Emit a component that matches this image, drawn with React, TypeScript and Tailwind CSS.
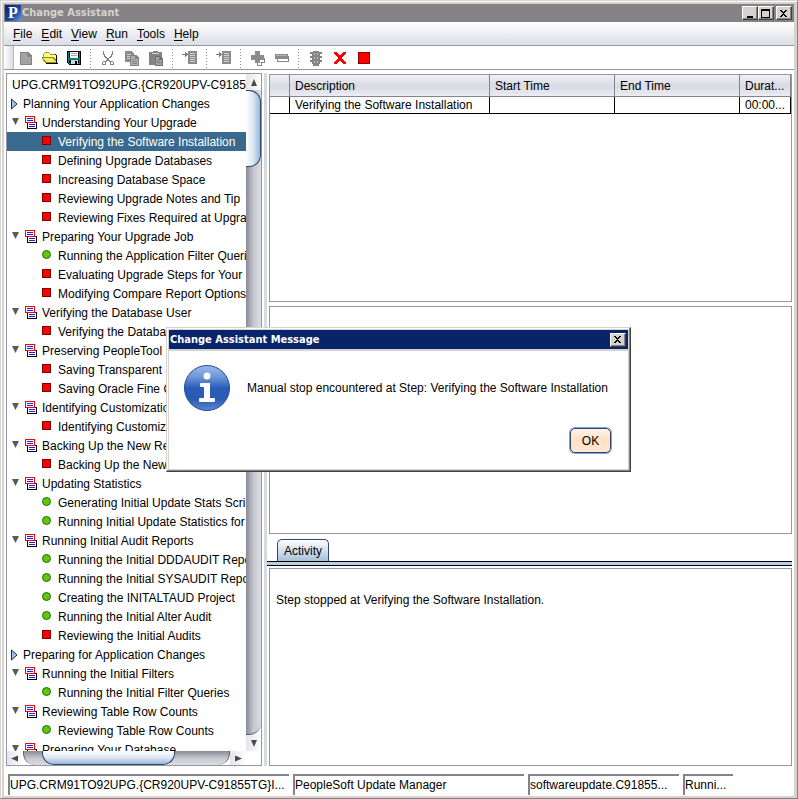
import type { ReactNode } from "react";

type Kind = "root" | "closed" | "group" | "stop" | "done";

const ROWS: { kind: Kind; text: string; selected?: boolean }[] = [
  { kind: "root", text: "UPG.CRM91TO92UPG.{CR920UPV-C91855TG}" },
  { kind: "closed", text: "Planning Your Application Changes" },
  { kind: "group", text: "Understanding Your Upgrade" },
  { kind: "stop", text: "Verifying the Software Installation", selected: true },
  { kind: "stop", text: "Defining Upgrade Databases" },
  { kind: "stop", text: "Increasing Database Space" },
  { kind: "stop", text: "Reviewing Upgrade Notes and Tip" },
  { kind: "stop", text: "Reviewing Fixes Required at Upgrade" },
  { kind: "group", text: "Preparing Your Upgrade Job" },
  { kind: "done", text: "Running the Application Filter Queries" },
  { kind: "stop", text: "Evaluating Upgrade Steps for Your" },
  { kind: "stop", text: "Modifying Compare Report Options" },
  { kind: "group", text: "Verifying the Database User" },
  { kind: "stop", text: "Verifying the Database User" },
  { kind: "group", text: "Preserving PeopleTool" },
  { kind: "stop", text: "Saving Transparent" },
  { kind: "stop", text: "Saving Oracle Fine Grained" },
  { kind: "group", text: "Identifying Customizations" },
  { kind: "stop", text: "Identifying Customizations" },
  { kind: "group", text: "Backing Up the New Release" },
  { kind: "stop", text: "Backing Up the New Release" },
  { kind: "group", text: "Updating Statistics" },
  { kind: "done", text: "Generating Initial Update Stats Scripts" },
  { kind: "done", text: "Running Initial Update Statistics for" },
  { kind: "group", text: "Running Initial Audit Reports" },
  { kind: "done", text: "Running the Initial DDDAUDIT Report" },
  { kind: "done", text: "Running the Initial SYSAUDIT Report" },
  { kind: "done", text: "Creating the INITALTAUD Project" },
  { kind: "done", text: "Running the Initial Alter Audit" },
  { kind: "stop", text: "Reviewing the Initial Audits" },
  { kind: "closed", text: "Preparing for Application Changes" },
  { kind: "group", text: "Running the Initial Filters" },
  { kind: "done", text: "Running the Initial Filter Queries" },
  { kind: "group", text: "Reviewing Table Row Counts" },
  { kind: "done", text: "Reviewing Table Row Counts" },
  { kind: "group", text: "Preparing Your Database" },
];

function Pix({ children }: { children: ReactNode }) {
  return (
    <svg width="16" height="16" viewBox="0 0 16 16" shapeRendering="crispEdges" aria-hidden="true">
      {children}
    </svg>
  );
}

function GroupIcon() {
  return (
    <svg width="12" height="13" viewBox="0 0 12 13" shapeRendering="crispEdges" className="shrink-0" aria-hidden="true">
      <rect x="2.5" y="6.5" width="9" height="6" fill="#fff" stroke="#000" />
      <rect x="0.5" y="0.5" width="9" height="6" fill="#fff" stroke="#f00" />
      <path d="M2 2.5h6M2 4.5h6M4 8.5h6M4 10.5h6" stroke="#2a1ae0" />
    </svg>
  );
}

function TreeRow({ kind, text, selected }: { kind: Kind; text: string; selected?: boolean }) {
  if (kind === "root")
    return (
      <li role="treeitem" className="flex h-[19px] items-center">
        <span className="h-4 w-px bg-[#1c3a6b]" />
        <span className="ml-[5px]">{text}</span>
      </li>
    );
  if (kind === "closed")
    return (
      <li role="treeitem" className="flex h-[19px] items-center pl-1">
        <button aria-label={"Expand " + text} className="w-3">
          <svg width="7" height="12" viewBox="0 0 7 12" aria-hidden="true">
            <path d="M.5 1v10L6 6z" fill="#a3c0e6" stroke="#1c2c4a" />
          </svg>
        </button>
        <span>{text}</span>
      </li>
    );
  if (kind === "group")
    return (
      <li role="treeitem" className="flex h-[19px] items-center pl-1">
        <button aria-label={"Collapse " + text} className="w-3.5 pb-0.5">
          <svg width="9" height="7" viewBox="0 0 9 7" aria-hidden="true">
            <path d="M1 0h7L4.500 7z" fill="#5a5a5a" />
          </svg>
        </button>
        <GroupIcon />
        <span className="ml-[5px]">{text}</span>
      </li>
    );
  return (
    <li
      role="treeitem"
      aria-selected={!!selected}
      className={selected ? "flex h-[19px] items-center bg-[#39698e] pl-[35px] text-white" : "flex h-[19px] items-center pl-[35px]"}
    >
      <svg width="9" height="9" viewBox="0 0 9 9" className="mb-0.5 shrink-0" aria-hidden="true">
        {kind === "stop" ? (
          <rect x="0.5" y="0.5" width="8" height="8" fill="#f00" stroke="#7b0000" />
        ) : (
          <circle cx="4.5" cy="4.5" r="4" fill="#5fc80a" stroke="#1f6e08" />
        )}
      </svg>
      <span className="ml-[7px]">{text}</span>
    </li>
  );
}

function Tool({ label, children }: { label: string; children: ReactNode }) {
  return (
    <button aria-label={label} className="flex h-full w-6 shrink-0 items-center justify-center">
      <Pix>{children}</Pix>
    </button>
  );
}

function Sep() {
  return (
    <span className="flex w-2.5 shrink-0 items-center justify-center">
      <svg width="2" height="20" viewBox="0 0 2 20" shapeRendering="crispEdges" aria-hidden="true">
        <path d="M.5 1v19" stroke="#8c8c94" strokeDasharray="1 2" />
      </svg>
    </span>
  );
}

function ListIcon() {
  return (
    <>
      <rect x="6" y="1" width="9" height="13" fill="#8c8a8c" />
      <path d="M8 3.500h5M8 5.500h5M8 7.500h5M8 9.500h5M8 11.500h5" stroke="#d2d2d2" />
      <path d="M0 4h3V2h1v1h1v1h1v1H5v1H4v1H3V5H0z" fill="#7b797b" />
    </>
  );
}

function Toolbar() {
  return (
    <div role="toolbar" className="flex h-6 border-b border-[#9496a5] bg-white">
      <span className="w-2.5 shrink-0 border-r border-[#b8b8c8] bg-gradient-to-r from-white to-[#dcdce4]" />
      <Tool label="New">
        <path d="M2 2h8l4 4v9H2z" fill="#848284" />
        <path d="M3 3h6v4h4v7H3z" fill="#a5a2a5" />
        <path d="M9.500 3v3.500H13" fill="none" stroke="#8c8a8c" />
      </Tool>
      <Tool label="Open">
        <path d="M1 4h1V3h1V2h4v1h1v1h5v3h-1V5H7V4H6V3H3v1H2v7H1z" fill="#a59a10" />
        <path d="M3 3h4v1h1v1h5v3H2V4h1z" fill="#fffb9c" />
        <path d="M0 7h12v1h1v1h1v1h1v3H3v-1H2v-1H1V9H0z" fill="#948a00" />
        <path d="M1 8h10v1h1v1h1v1h1v1H4v-1H3v-1H2V9H1z" fill="#f7eb63" />
        <path d="M13 4h1v1h1v8h1v1H4v-1h10V5h-1z" fill="#000" />
      </Tool>
      <Tool label="Save">
        <path d="M1 1h14v14H3v-1H2v-1H1z" fill="#000" />
        <path d="M2 2h1v11h10V2h1v12H3v-1H2z" fill="#008284" />
        <rect x="4" y="2" width="8" height="6" fill="#fff" />
        <path d="M5 3.500h6M5 5.500h6" stroke="#a5a2a5" />
        <rect x="3" y="8" width="11" height="2" fill="#008284" />
        <rect x="5" y="10" width="7" height="4" fill="#d6d3d6" />
        <rect x="9" y="11" width="2" height="3" fill="#000" />
      </Tool>
      <Sep />
      <Tool label="Cut">
        <path d="M3.500 1v3l3 4.500M12.500 1v3l-3 4.500M9.500 8.500l-4 3M6.500 8.500l4 3" fill="none" stroke="#848284" strokeWidth="1.500" />
        <path d="M3.500 11.500h2v3h-3v-2zM12.500 11.500h-2v3h3v-2z" fill="none" stroke="#848284" />
      </Tool>
      <Tool label="Copy">
        <path d="M1 1h6l3 3v8H1z" fill="#8c8a8c" />
        <path d="M3 4.500h4M3 6.500h5M3 8.500h3" stroke="#cecfce" />
        <path d="M6 5h6l3 3v8H6z" fill="#848284" />
        <path d="M7 6h4v3h3v6H7z" fill="#b0aeb0" />
        <path d="M8 9.500h3M8 11.500h5M8 13.500h5" stroke="#848284" />
      </Tool>
      <Tool label="Paste">
        <path d="M1 2h4V1h5v1h4v13H1z" fill="#848284" />
        <path d="M4 3.500h7" stroke="#cecfce" />
        <path d="M7 6h5l3 3v7H7z" fill="#737173" />
        <path d="M8 7h3v3h3v5H8z" fill="#a5a2a5" />
        <path d="M9 10.500h2M9 12.500h4" stroke="#737173" />
      </Tool>
      <Sep />
      <Tool label="Insert step">
        <ListIcon />
      </Tool>
      <Sep />
      <Tool label="Insert task">
        <ListIcon />
      </Tool>
      <Sep />
      <Tool label="Expand all">
        <path d="M6.500 5.500h4v3h4v4h-3v3h-4v-3" fill="#fff" stroke="#848284" />
        <path d="M5 1h5v4h4v5h-4v3H5v-3H1V5h4z" fill="#8c8a8c" />
      </Tool>
      <Tool label="Collapse all">
        <rect x="3.500" y="6.500" width="11" height="5" fill="#fff" stroke="#848284" />
        <rect x="1" y="4" width="13" height="5" fill="#8c8a8c" />
        <path d="M2 5.500h11" stroke="#b5b2b5" />
      </Tool>
      <Sep />
      <Tool label="Run status">
        <path d="M5 1h6v1h3v2h-2v2h2v2h-2v2h2v2h-2v2h-1v2H5v-2H4v-2H2v-2h2V8H2V6h2V4H2V2h3z" fill="#848284" />
        <path d="M6 3h4v2H6zM6 7h4v2H6zM6 11h4v2H6z" fill="#bdbabd" />
        <path d="M7 3h2v2H7zM7 7h2v2H7zM7 11h2v2H7z" fill="#8c8a8c" />
      </Tool>
      <Tool label="Delete">
        <path d="M2 2h3v1h1v1h1v1h2V4h1V3h1V2h3v2h-1v1h-1v1h-1v1h-1v2h1v1h1v1h1v1h1v2h-3v-1h-1v-1H9v-1H7v1H6v1H5v1H2v-2h1v-1h1v-1h1V9h1V7H5V6H4V5H3V4H2z" fill="#f00" />
      </Tool>
      <Tool label="Stop">
        <rect x="2.500" y="2.500" width="11" height="11" fill="#f00" stroke="#8c0000" />
      </Tool>
    </div>
  );
}

function Caption({ label, children }: { label: string; children: ReactNode }) {
  return (
    <button
      aria-label={label}
      className="flex h-3.5 w-4 items-center justify-center border border-t-white border-r-[#424142] border-b-[#424142] border-l-white bg-[#d6d3ce] shadow-[inset_-1px_-1px_0_#848284]"
    >
      <svg width="10" height="9" viewBox="0 0 10 9" shapeRendering="crispEdges" aria-hidden="true">
        {children}
      </svg>
    </button>
  );
}

const CLOSE = <path d="M1 1h2v1h1v1h1V2h1V1h2v1H7v1H6v1H5v1h1v1h1v1h1v1H6V7H5V6H4v1H3v1H1V7h1V6h1V5h1V4H3V3H2V2H1z" fill="#000" />;

function Arrow({ label, dir }: { label: string; dir: "up" | "down" | "left" | "right" }) {
  const shape = { up: "M4 1L7 8H1z", down: "M1 1h6L4 8z", left: "M0 4.500L7 1.500v6z", right: "M1 1.500l7 3-7 3z" }[dir];
  return (
    <button aria-label={label} className="flex h-full max-h-4 w-full max-w-4 shrink-0 items-center justify-center bg-gradient-to-r from-[#e4e4ea] to-white">
      <svg width="8" height="9" viewBox="0 0 8 9" aria-hidden="true">
        <path d={shape} fill="#4a4a4a" />
      </svg>
    </button>
  );
}

function Tree() {
  return (
    <aside className="flex w-64 shrink-0 flex-col border border-[#9496a5]">
      <div className="flex min-h-0 flex-1">
        <ul role="tree" className="min-w-0 flex-1 overflow-hidden pt-px whitespace-nowrap">
          {ROWS.map((row, i) => (
            <TreeRow key={i} {...row} />
          ))}
        </ul>
        <div className="flex w-[15px] flex-col bg-gradient-to-r from-[#8a8a94] via-[#c6c6d0] to-[#dcdce4]">
          <Arrow label="Scroll up" dir="up" />
          <div className="h-[77px] rounded-r-xl border border-l-0 border-[#2b4a68] bg-gradient-to-r from-white via-[#dbe7f5] to-[#9db9d8]" />
          <div className="flex flex-1 bg-white">
            <div className="flex-1 rounded-br-xl border-b border-[#5a5a62] bg-gradient-to-r from-[#8a8a94] via-[#c6c6d0] to-[#dcdce4]" />
          </div>
          <Arrow label="Scroll down" dir="down" />
        </div>
      </div>
      <div className="flex h-3.5 pr-[15px]">
        <Arrow label="Scroll left" dir="left" />
        <div className="flex flex-1 rounded-b-xl border-x border-[#5a5a62] bg-gradient-to-b from-[#8a8a94] via-[#c6c6d0] to-[#dcdce4] pl-[18px]">
          <div className="w-[133px] rounded-b-xl border border-t-0 border-[#2b4a68] bg-gradient-to-b from-white via-[#dbe7f5] to-[#9db9d8]" />
        </div>
        <Arrow label="Scroll right" dir="right" />
      </div>
    </aside>
  );
}

function StepTable() {
  const th = "border-r border-b border-[#84848c] px-[5px] text-left font-normal";
  const td = "border-r border-b border-black px-[5px]";
  return (
    <section className="min-h-0 flex-1 border border-[#9496a5]">
      <table className="w-full table-fixed border-separate border-spacing-0 whitespace-nowrap">
        <colgroup>
          <col className="w-5" />
          <col className="w-[200px]" />
          <col className="w-[125px]" />
          <col className="w-[125px]" />
          <col />
        </colgroup>
        <thead>
          <tr className="h-[22px] bg-gradient-to-b from-[#f0f0f4] via-[#d8dae4] to-[#eeeef3]">
            <th className={th} aria-label="Status" />
            <th className={th}>Description</th>
            <th className={th}>Start Time</th>
            <th className={th}>End Time</th>
            <th className={th}>Durat...</th>
          </tr>
        </thead>
        <tbody>
          <tr className="h-4 leading-4">
            <td className={td} />
            <td className={td}>Verifying the Software Installation</td>
            <td className={td} />
            <td className={td} />
            <td className={td}>00:00...</td>
          </tr>
        </tbody>
      </table>
    </section>
  );
}

function Dialog() {
  return (
    <div className="fixed inset-0 flex items-center justify-center pr-px">
      <div
        role="dialog"
        aria-labelledby="dialog-title"
        className="flex w-[465px] flex-col border border-t-[#d6d3ce] border-r-[#424142] border-b-[#424142] border-l-[#d6d3ce] bg-[#d6d3ce] p-px shadow-[inset_-1px_-1px_0_#848284,inset_1px_1px_0_#fff]"
      >
        <div className="m-px flex h-[19px] items-center bg-[#08246b] pr-0.5 text-white">
          <h2 id="dialog-title" className="flex-1 pl-px font-['DejaVu_Sans_Condensed','DejaVu_Sans',sans-serif] text-[11px] font-bold">
            Change Assistant Message
          </h2>
          <Caption label="Close message">{CLOSE}</Caption>
        </div>
        <div className="m-px flex flex-col bg-white px-[15px] pt-3.5 pb-4">
          <div className="flex items-center gap-[17px]">
            <svg width="46" height="46" viewBox="0 0 46 46" className="shrink-0" aria-hidden="true">
              <defs>
                <linearGradient id="info" x1="0" y1="0" x2="0" y2="1">
                  <stop offset="0" stopColor="#9db8e8" />
                  <stop offset="0.25" stopColor="#6f96d8" />
                  <stop offset="0.5" stopColor="#2a5db8" />
                  <stop offset="0.75" stopColor="#2a5ab4" />
                  <stop offset="1" stopColor="#5c88d0" />
                </linearGradient>
              </defs>
              <circle cx="23" cy="23" r="22.500" fill="url(#info)" stroke="#1f4a9c" />
              <circle cx="23" cy="11" r="3.500" fill="#fff" />
              <path d="M17 18h9v15h4q1 0 1 1v2q0 1-1 1H16q-1 0-1-1v-2q0-1 1-1h4V22h-3q-1 0-1-1v-2q0-1 1-1z" fill="#fff" />
            </svg>
            <p className="whitespace-nowrap">Manual stop encountered at Step: Verifying the Software Installation</p>
          </div>
          <button className="mt-[17px] mr-0.5 h-[25px] w-[41px] self-end rounded-[5px] border border-[#33456b] bg-gradient-to-b from-[#fff4ea] via-[#ffe0c4] to-[#ffe8d4] ring-1 ring-[#7ba3dc]">
            OK
          </button>
        </div>
      </div>
    </div>
  );
}

const MENUS = ["File", "Edit", "View", "Run", "Tools", "Help"];

export default function App() {
  const field = "h-[21px] overflow-hidden border-t-2 border-l-2 border-[#84828c] leading-[18px] whitespace-nowrap";
  return (
    <div className="flex h-screen flex-col overflow-hidden border border-t-[#d6d3ce] border-r-[#848284] border-b-[#848284] border-l-[#d6d3ce] bg-[#d6d3ce] p-[3px] pb-0.5 font-['Liberation_Sans',Arial,sans-serif] text-[12px] leading-4 text-black shadow-[inset_1px_1px_0_#fff]">
      <header className="flex h-[18px] shrink-0 items-center bg-[#848284] pr-0.5">
        <svg width="16" height="16" viewBox="0 0 16 16" className="ml-px" aria-hidden="true">
          <defs>
            <linearGradient id="logo" x1="0" y1="0" x2="1" y2="1">
              <stop offset="0" stopColor="#06206a" />
              <stop offset="0.6" stopColor="#1c4ca4" />
              <stop offset="1" stopColor="#6a9ae0" />
            </linearGradient>
          </defs>
          <rect width="16" height="16" fill="url(#logo)" />
          <text x="3" y="13" fill="#fff" fontFamily="Liberation Serif, serif" fontSize="16" fontWeight="bold">P</text>
        </svg>
        <h1 className="ml-px flex-1 font-['DejaVu_Sans_Condensed','DejaVu_Sans',sans-serif] text-[11px] font-bold text-[#d6d3ce]">Change Assistant</h1>
        <Caption label="Minimize">
          <path d="M2 7h6v2H2z" fill="#000" />
        </Caption>
        <Caption label="Maximize">
          <path d="M0 0h9v9H0zM1 2v6h7V2z" fill="#000" fillRule="evenodd" />
        </Caption>
        <span className="w-0.5" />
        <Caption label="Close">{CLOSE}</Caption>
      </header>
      <nav className="flex h-6 shrink-0 items-center gap-[9px] border-b border-[#9496a5] bg-gradient-to-b from-white to-[#dcdde6] pt-px pl-[9px]">
        {MENUS.map((m) => (
          <button key={m}>
            <span className="underline underline-offset-2">{m[0]}</span>
            {m.slice(1)}
          </button>
        ))}
      </nav>
      <Toolbar />
      <main className="flex min-h-0 flex-1 bg-white pt-[3px] pr-0.5 pl-0.5">
        <Tree />
        <div className="ml-0.5 w-[3px] shrink-0 bg-[#d6dbde]" />
        <div className="flex min-w-0 flex-1 flex-col pt-px">
          <div className="flex min-h-0 flex-1 flex-col gap-1 pl-0.5">
            <StepTable />
            <section className="min-h-0 flex-1 border border-[#9496a5]" />
          </div>
          <div role="tablist" className="mt-[5px] flex border-b border-black pl-2.5">
            <button
              role="tab"
              aria-selected="true"
              className="h-[22px] rounded-t-[5px] border border-b-0 border-[#33456b] bg-gradient-to-b from-white to-[#a9c0da] px-1.5 pt-px"
            >
              Activity
            </button>
          </div>
          <div className="h-1 border-b border-black bg-[#b8cfe5]" />
          <section role="tabpanel" className="mt-0.5 ml-0.5 h-[198px] border border-[#9496a5] px-1.5 pt-[23px]">
            Step stopped at Verifying the Software Installation.
          </section>
        </div>
      </main>
      <footer className="flex h-[30px] shrink-0 items-start gap-1 bg-white pt-2 pl-1">
        <div className={field + " w-[281px]"}>UPG.CRM91TO92UPG.{"{CR920UPV-C91855TG}"}I...</div>
        <div className={field + " w-[231px]"}>PeopleSoft Update Manager</div>
        <div className={field + " w-[151px]"}>softwareupdate.C91855...</div>
        <div className={field + " w-[50px]"}>Runni...</div>
      </footer>
      <Dialog />
    </div>
  );
}
